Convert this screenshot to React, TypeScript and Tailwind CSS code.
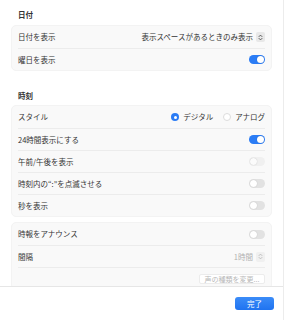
import React from "react";

const font = { fontFamily: '"Noto Sans CJK JP", "Noto Sans", sans-serif' };

const Toggle: React.FC<{ on?: boolean; disabled?: boolean }> = ({ on = false, disabled = false }) => (
  <div
    className={`w-[16px] h-[9px] rounded-full p-[1px] flex ${on ? "justify-end bg-[#2b7cf5]" : disabled ? "bg-[#f0f0f0]" : "bg-[#e2e2e2]"}`}
  >
    <div className={`w-[7px] h-[7px] rounded-full ${disabled ? "bg-[#fbfbfb]" : "bg-white"} shadow-[0_0_1px_rgba(0,0,0,0.25)]`} />
  </div>
);

const Stepper: React.FC<{ faded?: boolean }> = ({ faded }) => (
  <div className={`w-[9px] h-[10px] rounded-[2px] flex items-center justify-center ${faded ? "bg-[#f0f0f0]" : "bg-[#e8e8e8]"}`}>
    <svg width="5" height="7" viewBox="0 0 5 7" fill="none">
      <path d="M1 2.6 L2.5 1.1 L4 2.6 M1 4.4 L2.5 5.9 L4 4.4" stroke={faded ? "#b5b5b5" : "#3c3c3c"} strokeWidth="0.8" strokeLinecap="round" strokeLinejoin="round" />
    </svg>
  </div>
);

const Radio: React.FC<{ checked?: boolean; label: string }> = ({ checked, label }) => (
  <div className="flex items-center gap-[4px]">
    {checked ? (
      <div className="w-[8px] h-[8px] rounded-full bg-[#2b7cf5] flex items-center justify-center">
        <div className="w-[3px] h-[3px] rounded-full bg-white" />
      </div>
    ) : (
      <div className="w-[8px] h-[8px] rounded-full bg-white border border-[#dcdcdc]" />
    )}
    <span>{label}</span>
  </div>
);

const Row: React.FC<{ label: string; first?: boolean; muted?: boolean; children?: React.ReactNode }> = ({ label, first, muted, children }) => (
  <div className={`h-[22px] mx-[6px] flex items-center justify-between ${first ? "" : "border-t border-[#ececec]"}`}>
    <span className={muted ? "text-[#8a8a8a]" : "text-[#333333]"}>{label}</span>
    <div className="flex items-center gap-[3px]">{children}</div>
  </div>
);

const Box: React.FC<{ children: React.ReactNode; className?: string }> = ({ children, className = "" }) => (
  <div className={`mx-[11px] rounded-[5px] bg-[#f9f9f9] border border-[#f3f3f3] ${className}`}>{children}</div>
);

export default function App() {
  return (
    <div className="w-[286px] h-[320px] bg-white overflow-hidden text-[7.5px] leading-[10px]" style={font}>
      <div className="w-[284px] h-full border-r border-[#ececec] flex flex-col">
        <div className="h-[286px] overflow-hidden">
          <div className="pt-[10px] px-[18px] h-[20px] font-bold text-[#333333]">日付</div>
          <Box className="mt-[5px]">
            <Row label="日付を表示" first>
              <span className="text-[#333333]">表示スペースがあるときのみ表示</span>
              <Stepper />
            </Row>
            <Row label="曜日を表示">
              <Toggle on />
            </Row>
          </Box>

          <div className="mt-[20px] px-[18px] h-[10px] font-bold text-[#333333]">時刻</div>
          <Box className="mt-[4px]">
            <Row label="スタイル" first>
              <div className="flex items-center gap-[10px] text-[#333333]">
                <Radio checked label="デジタル" />
                <Radio label="アナログ" />
              </div>
            </Row>
            <Row label="24時間表示にする">
              <Toggle on />
            </Row>
            <Row label="午前/午後を表示">
              <Toggle disabled />
            </Row>
            <Row label={"時刻内の\u201C:\u201Dを点滅させる"}>
              <Toggle />
            </Row>
            <Row label="秒を表示">
              <Toggle />
            </Row>
          </Box>

          <Box className="mt-[5px]">
            <Row label="時報をアナウンス" first>
              <Toggle />
            </Row>
            <Row label="間隔">
              <span className="text-[#b0b0b0]">1時間</span>
              <Stepper faded />
            </Row>
            <div className="h-[22px] mx-[6px] border-t border-[#ececec] flex items-center justify-end">
              <div className="w-[66px] h-[10px] rounded-[2px] bg-white border border-[#ececec] text-[#b8b8b8] text-[7px] flex items-center justify-center leading-[8px] whitespace-nowrap overflow-hidden">
                声の種類を変更...
              </div>
            </div>
          </Box>
        </div>
        <div className="flex-1 border-t border-[#e6e6e6] flex items-center justify-end pr-[9px]">
          <div className="w-[39px] h-[13px] rounded-[3px] bg-gradient-to-b from-[#3b8cf8] to-[#1f73f0] text-white flex items-center justify-center">
            完了
          </div>
        </div>
      </div>
    </div>
  );
}
